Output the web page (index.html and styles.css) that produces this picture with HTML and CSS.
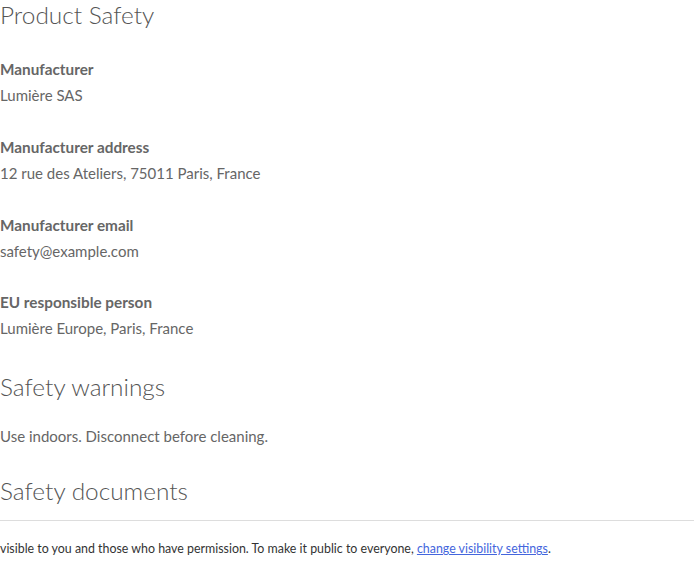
FILE: index.html
```html
<!DOCTYPE html>
<html lang="en">
<head>
<meta charset="utf-8">
<title>Product Safety</title>
<link rel="stylesheet" href="styles.css">
</head>
<body>
<main class="page">
  <section class="safety">
    <h2 class="heading heading-first">Product Safety</h2>
    <dl class="facts">
      <div class="fact">
        <dt class="fact-label">Manufacturer</dt>
        <dd class="fact-value">Lumière SAS</dd>
      </div>
      <div class="fact">
        <dt class="fact-label">Manufacturer address</dt>
        <dd class="fact-value">12 rue des Ateliers, 75011 Paris, France</dd>
      </div>
      <div class="fact">
        <dt class="fact-label">Manufacturer email</dt>
        <dd class="fact-value">safety@example.com</dd>
      </div>
      <div class="fact">
        <dt class="fact-label">EU responsible person</dt>
        <dd class="fact-value">Lumière Europe, Paris, France</dd>
      </div>
    </dl>
    <h2 class="heading">Safety warnings</h2>
    <p class="text">Use indoors. Disconnect before cleaning.</p>
    <h2 class="heading">Safety documents</h2>
  </section>
  <div class="notice">
    <p class="notice-text">visible to you and those who have permission. To make it public to everyone, <a class="notice-link" href="#">change visibility settings</a>.</p>
  </div>
</main>
</body>
</html>
```

FILE: styles.css
```css
html, body {
  margin: 0;
  padding: 0;
  background: #ffffff;
}
body {
  font-family: "Lato", "Open Sans", sans-serif;
  color: #666666;
  overflow: hidden;
}
.page {
  display: flex;
  flex-direction: column;
}
.heading {
  margin: 0;
  font-weight: 300;
  font-size: 24.4px;
  line-height: 30px;
  color: #555555;
}
.facts {
  margin: 26px 0 0 0;
  display: flex;
  flex-direction: column;
  gap: 25.8px;
}
.fact {
  display: flex;
  flex-direction: column;
}
.fact-label {
  font-weight: 700;
  font-size: 15.3px;
  line-height: 26px;
  color: #666666;
}
.fact-value {
  margin: 0;
  font-size: 15px;
  line-height: 26px;
  color: #666666;
}
.facts + .heading {
  margin-top: 31px;
}
.text {
  margin: 21px 0 27px 0;
  font-size: 15px;
  line-height: 26px;
}
.safety {
  padding-bottom: 14px;
  border-bottom: 1px solid #dddddd;
}
.notice {
  padding-top: 17px;
}
.notice-text {
  margin: 0;
  font-size: 12.4px;
  line-height: 22px;
  color: #333333;
  white-space: nowrap;
}
.notice-link {
  color: #4466dd;
  text-decoration: underline;
}
```
